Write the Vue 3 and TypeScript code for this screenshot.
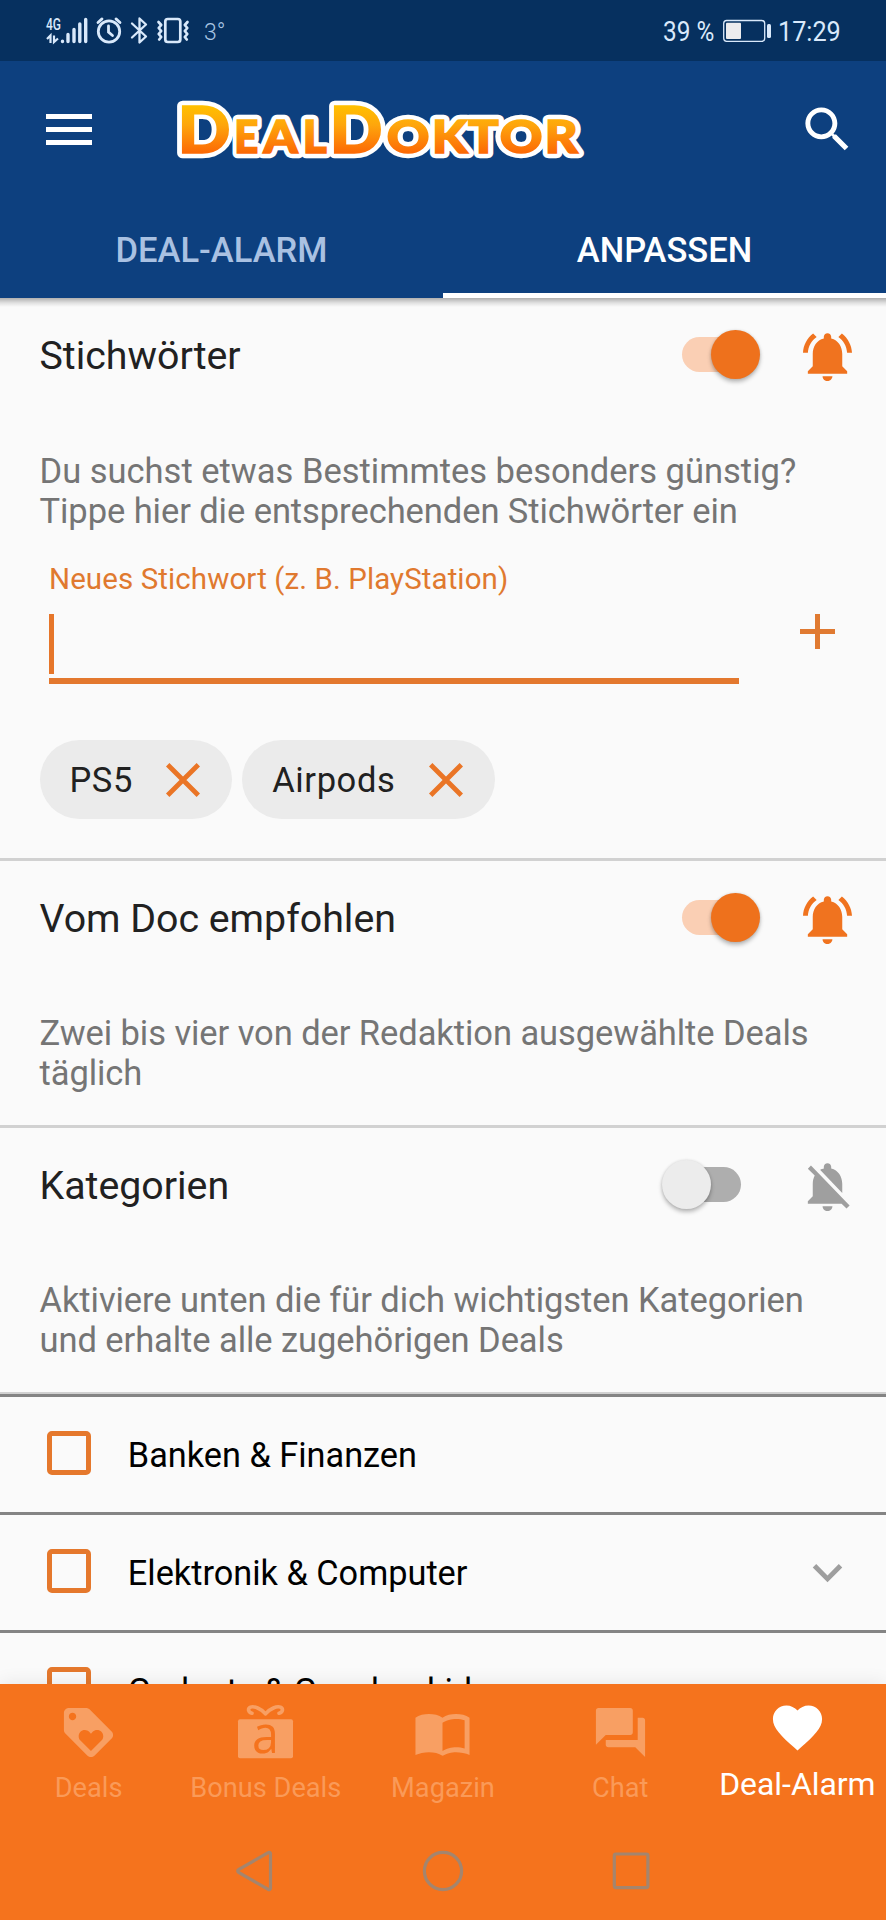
<script setup lang="ts">
import { ref } from 'vue'

interface Glyph { ch: string; x: number; size: number; bearing: number; sx: number }

// Small-caps wordmark: each letter has its own optical width.
const logo: Glyph[] = [
  { ch: 'D', x: 183, size: 64.5, bearing: 5.1, sx: 1.08 },
  { ch: 'E', x: 237.4, size: 45, bearing: 3.5, sx: 0.93 },
  { ch: 'A', x: 263.4, size: 45, bearing: 0, sx: 1.08 },
  { ch: 'L', x: 306.4, size: 45, bearing: 3.5, sx: 1.02 },
  { ch: 'D', x: 334.9, size: 64.5, bearing: 5.1, sx: 1.08 },
  { ch: 'O', x: 388.4, size: 45, bearing: 1.4, sx: 1.17 },
  { ch: 'K', x: 436, size: 45, bearing: 3.5, sx: 1.13 },
  { ch: 'T', x: 468.6, size: 45, bearing: 0.4, sx: 1.12 },
  { ch: 'O', x: 501.4, size: 45, bearing: 1.4, sx: 1.17 },
  { ch: 'R', x: 548.6, size: 45, bearing: 3.5, sx: 1.13 },
]

const tabs = ['DEAL-ALARM', 'ANPASSEN']
const activeTab = ref(1)

const keywords = ref(['PS5', 'Airpods'])
const keywordsOn = ref(true)
const docOn = ref(true)
const categoriesOn = ref(false)

const categories = [
  { name: 'Banken & Finanzen', expandable: false },
  { name: 'Elektronik & Computer', expandable: true },
  { name: 'Gadgets & Geschenkideen', expandable: false },
]

const bellOn = 'M7.58 4.08L6.15 2.65C3.75 4.48 2.17 7.3 2.03 10.5h2c.15-2.65 1.51-4.97 3.55-6.42zm12.39 6.42h2c-.15-3.2-1.73-6.02-4.12-7.85l-1.42 1.43c2.02 1.45 3.39 3.77 3.54 6.42zM18 11c0-3.07-1.64-5.64-4.5-6.32V4c0-.83-.67-1.5-1.5-1.5s-1.5.67-1.5 1.5v.68C7.63 5.36 6 7.92 6 11v5l-2 2v1h16v-1l-2-2v-5zm-6 11c.14 0 .27-.01.4-.04.65-.14 1.18-.58 1.44-1.18.1-.24.15-.5.15-.78h-4c.01 1.1.9 2 2.01 2z'
const bellOff = 'M20 18.69L7.84 6.14 5.27 3.49 4 4.76l2.8 2.8v.01c-.52.99-.8 2.16-.8 3.42v5l-2 2v1h13.73l2 2L21 19.72l-1-1.03zM12 22c1.11 0 2-.89 2-2h-4c0 1.11.89 2 2 2zm6-7.32V11c0-3.08-1.64-5.64-4.5-6.32V4c0-.83-.67-1.5-1.5-1.5s-1.5.67-1.5 1.5v.68c-.15.03-.29.08-.42.12-.1.03-.2.07-.3.11h-.01c-.01 0-.01 0-.02.01-.23.09-.46.2-.68.31 0 0-.01 0-.01.01L18 14.68z'
</script>

<template>
  <div class="screen">
    <div class="status">
      <div class="status-left">
        <svg class="signal" width="43" height="30" viewBox="46 16 43 30">
          <text x="46" y="29.500" class="net" textLength="15" lengthAdjust="spacingAndGlyphs">4G</text>
          <path d="M47 39l3.500-3.500V43M54 35.500V42l4-3.500" fill="none" stroke="currentColor" stroke-width="2.200" />
          <path d="M62.500 41.300v.2M68 34.500v7M74 29.500v12M79.800 24v17.500M85.700 19.500v22" fill="none" stroke="currentColor" stroke-width="3.400" stroke-linecap="round" />
        </svg>
        <svg class="alarm" width="28" height="30" viewBox="95 16 28 30" fill="none" stroke="currentColor" stroke-width="2.800" stroke-linecap="round">
          <circle cx="109" cy="31.500" r="10.700" />
          <path d="M98 22.500l4-3.600M120 22.500l-4-3.600M108.500 26v6l4 3.500" />
        </svg>
        <svg class="bt" width="20" height="30" viewBox="129 16 20 30" fill="none" stroke="currentColor" stroke-width="2.300" stroke-linejoin="round" stroke-linecap="round">
          <path d="M132 23.500l14 13-6.500 6V18.500l6.500 6-14 13" />
        </svg>
        <svg class="vib" width="34" height="30" viewBox="156 16 34 30" fill="none" stroke="currentColor" stroke-width="2.700" stroke-linejoin="round" stroke-linecap="round">
          <rect x="165.300" y="19" width="15" height="23" rx="2.500" />
          <path d="M158.500 22l2.700 3-2.500 3 2.500 3-2.500 3 2.500 3-2 2.500M187.500 22l-2.700 3 2.500 3-2.500 3 2.500 3-2.500 3 2 2.500" />
        </svg>
        <span class="temp">3°</span>
      </div>
      <div class="status-right">
        <span class="pct">39 %</span>
        <svg class="battery" width="50" height="24" viewBox="722 19 50 24">
          <rect x="723.700" y="20.500" width="41" height="20.800" rx="3" fill="none" stroke="currentColor" stroke-width="1.300" />
          <rect x="726" y="22.800" width="15" height="16.300" rx="1" fill="#ececee" />
          <rect x="767" y="24" width="4" height="14" rx="1.500" fill="currentColor" />
        </svg>
        <span class="clock">17:29</span>
      </div>
    </div>

    <header class="header">
      <div class="toolbar">
        <svg class="menu" width="46" height="31" viewBox="0 0 46 31" fill="#fff">
          <rect width="46" height="5" /><rect y="13" width="46" height="5" /><rect y="26" width="46" height="5" />
        </svg>
        <svg class="logo" width="416" height="68" viewBox="172 96 416 68">
          <defs>
            <linearGradient id="gold" gradientUnits="userSpaceOnUse" x1="0" y1="-46" x2="0" y2="0">
              <stop offset="0" stop-color="#ffbf00" />
              <stop offset="0.4" stop-color="#fea60c" />
              <stop offset="1" stop-color="#fc6a05" />
            </linearGradient>
          </defs>
          <g class="outline" aria-hidden="true">
            <g v-for="(g, i) in logo" :key="i" :transform="`translate(${g.x} 152.600) scale(${g.sx} 1)`">
              <text :x="-g.bearing" :font-size="g.size">{{ g.ch }}</text>
            </g>
          </g>
          <g class="face">
            <g v-for="(g, i) in logo" :key="i" :transform="`translate(${g.x} 152.600) scale(${g.sx} 1)`">
              <text :x="-g.bearing" :font-size="g.size">{{ g.ch }}</text>
            </g>
          </g>
        </svg>
        <svg class="search" width="59" height="59" viewBox="0 0 24 24" fill="#fff">
          <path d="M15.500 14h-.79l-.28-.27C15.410 12.590 16 11.110 16 9.500 16 5.910 13.090 3 9.500 3S3 5.910 3 9.500 5.910 16 9.500 16c1.610 0 3.090-.59 4.230-1.570l.27.28v.79l5 4.990L20.490 19l-4.990-5zm-6 0C7.010 14 5 11.990 5 9.500S7.010 5 9.500 5 14 7.010 14 9.500 11.990 14 9.500 14z" />
        </svg>
      </div>
      <nav class="tabs">
        <button v-for="(t, i) in tabs" :key="t" class="tab" :class="{ active: i === activeTab }" @click="activeTab = i">{{ t }}</button>
      </nav>
    </header>

    <main class="content">
      <section class="block first">
        <div class="head">
          <h2>Stichwörter</h2>
          <button class="switch" :class="{ on: keywordsOn }" @click="keywordsOn = !keywordsOn"><i class="track"></i><i class="thumb"></i></button>
          <svg class="bell" :class="{ on: keywordsOn }" viewBox="0 0 24 24"><path :d="keywordsOn ? bellOn : bellOff" /></svg>
        </div>
        <p class="desc">Du suchst etwas Bestimmtes besonders günstig?<br><span class="tight">Tippe hier die entsprechenden Stichwörter ein</span></p>
        <div class="entry">
          <div class="field">
            <label>Neues Stichwort (z. B. PlayStation)</label>
            <div class="input"><span class="caret"></span></div>
          </div>
          <svg class="plus" width="35" height="35" viewBox="0 0 35 35"><path d="M17.500 0v35M0 17.500h35" /></svg>
        </div>
        <div class="chips">
          <span v-for="k in keywords" :key="k" class="chip">
            {{ k }}
            <svg width="34" height="34" viewBox="0 0 34 34"><path d="M1.700 1.700l30.600 30.600M32.300 1.700L1.700 32.300" /></svg>
          </span>
        </div>
      </section>

      <section class="block">
        <div class="head">
          <h2>Vom Doc empfohlen</h2>
          <button class="switch" :class="{ on: docOn }" @click="docOn = !docOn"><i class="track"></i><i class="thumb"></i></button>
          <svg class="bell" :class="{ on: docOn }" viewBox="0 0 24 24"><path :d="docOn ? bellOn : bellOff" /></svg>
        </div>
        <p class="desc tight">Zwei bis vier von der Redaktion ausgewählte Deals<br>täglich</p>
      </section>

      <section class="block last">
        <div class="head">
          <h2>Kategorien</h2>
          <button class="switch" :class="{ on: categoriesOn }" @click="categoriesOn = !categoriesOn"><i class="track"></i><i class="thumb"></i></button>
          <svg class="bell" :class="{ on: categoriesOn }" viewBox="0 0 24 24"><path :d="categoriesOn ? bellOn : bellOff" /></svg>
        </div>
        <p class="desc tight">Aktiviere unten die für dich wichtigsten Kategorien<br>und erhalte alle zugehörigen Deals</p>
      </section>

      <ul class="cats">
        <li v-for="c in categories" :key="c.name">
          <span class="box"></span>
          <span class="name">{{ c.name }}</span>
          <svg v-if="c.expandable" class="chev" width="59" height="59" viewBox="0 0 24 24"><path d="M16.590 8.590L12 13.170 7.410 8.590 6 10l6 6 6-6z" /></svg>
        </li>
      </ul>
    </main>

    <footer class="footer">
      <nav class="bottom">
        <a class="item">
          <svg viewBox="0 0 24 24"><path d="M21.410 11.580l-9-9C12.050 2.220 11.550 2 11 2H4c-1.100 0-2 .9-2 2v7c0 .55.22 1.050.59 1.420l9 9c.36.36.86.58 1.410.58.55 0 1.050-.22 1.410-.59l7-7c.37-.36.59-.86.59-1.410 0-.55-.23-1.060-.59-1.420zM5.500 7C4.670 7 4 6.330 4 5.500S4.670 4 5.500 4 7 4.670 7 5.500 6.330 7 5.500 7zm11.770 8.270L13 19.540l-4.270-4.270C8.280 14.810 8 14.190 8 13.500c0-1.380 1.120-2.500 2.500-2.500.69 0 1.320.28 1.770.74l.73.72.73-.73c.45-.45 1.080-.73 1.770-.73 1.380 0 2.500 1.120 2.500 2.500 0 .69-.28 1.320-.73 1.770z" /></svg>
          <span>Deals</span>
        </a>
        <a class="item">
          <svg viewBox="0 0 59 59">
            <rect x="2" y="16.300" width="55" height="39" rx="2" />
            <path d="M29.500 10.800C25 5.500 18 2.800 14.500 4.200 11.500 5.500 12 9.600 16 10.200M29.500 10.800C34 5.500 41 2.800 44.500 4.200 47.500 5.500 47 9.600 43 10.200" class="bow" />
            <g transform="translate(29.500 50) scale(0.930 1)"><text class="gift-a">a</text></g>
          </svg>
          <span>Bonus Deals</span>
        </a>
        <a class="item">
          <svg viewBox="0 0 24 24"><path fill-rule="evenodd" d="M12 6C10.550 4.900 8.450 4.500 6.500 4.500S2.450 4.900 1 6v15.200C2.450 20.400 4.550 20 6.500 20s4.050.4 5.500 1.500c1.350-.85 3.800-1.500 5.500-1.500 1.650 0 4.050.3 5.500 1.200V6c-1.450-1.100-3.550-1.500-5.500-1.500S13.450 4.900 12 6zm0 2c1.350-.85 3.800-1.500 5.500-1.500 1.200 0 2.400.15 3.500.5v11.500c-1.100-.35-2.300-.5-3.500-.5-1.700 0-4.150.65-5.500 1.500V8z" /></svg>
          <span>Magazin</span>
        </a>
        <a class="item">
          <svg viewBox="0 0 24 24"><path d="M21 6h-2v9H6v2c0 .55.45 1 1 1h11l4 4V7c0-.55-.45-1-1-1zm-4 6V3c0-.55-.45-1-1-1H3c-.55 0-1 .45-1 1v14l4-4h10c.55 0 1-.45 1-1z" /></svg>
          <span>Chat</span>
        </a>
        <a class="item active">
          <svg viewBox="0 0 24 24"><path d="M12 21.350l-1.450-1.320C5.400 15.360 2 12.280 2 8.500 2 5.420 4.420 3 7.500 3c1.740 0 3.410.81 4.500 2.090C13.090 3.810 14.760 3 16.500 3 19.580 3 22 5.420 22 8.500c0 3.780-3.400 6.860-8.550 11.540L12 21.350z" /></svg>
          <span>Deal-Alarm</span>
        </a>
      </nav>
      <div class="sysnav">
        <svg width="42" height="42" viewBox="0 0 42 42"><path d="M36.500 3.800v34.400a1.500 1.500 0 0 1-2.300 1.200L4.500 22.300a1.500 1.500 0 0 1 0-2.600L34.200 2.600a1.500 1.500 0 0 1 2.300 1.200z" /></svg>
        <svg width="42" height="42" viewBox="0 0 42 42"><circle cx="21" cy="21" r="18.600" /></svg>
        <svg width="42" height="42" viewBox="0 0 42 42"><rect x="4.300" y="4" width="33.600" height="33.600" rx="1.500" /></svg>
      </div>
    </footer>
  </div>
</template>

<style>
body { margin: 0; background: #fafafa; }
</style>

<style scoped>
.screen { width: 886px; height: 1920px; display: flex; flex-direction: column; overflow: hidden; background: #fafafa; font-family: Roboto, "Noto Sans", sans-serif; color: #212121; }
.screen svg { display: block; flex: none; overflow: visible; }
button { border: 0; padding: 0; margin: 0; background: none; font: inherit; }

.status { flex: none; height: 61px; background: #06305f; color: #d9e9fb; display: flex; justify-content: space-between; }
.status-left { display: flex; padding: 16px 0 0 46px; height: 30px; }
.net { font: 500 17px Roboto, sans-serif; fill: currentColor; }
.alarm { margin-left: 6px; }
.bt { margin-left: 6px; }
.vib { margin-left: 7px; }
.temp { margin-left: 14px; font-size: 23px; line-height: 30px; font-weight: 300; color: #a9c6e4; padding-top: 1.500px; }
.status-right { display: flex; align-items: flex-start; padding-top: 19px; padding-right: 46px; }
.pct, .clock { font-size: 28px; line-height: 32px; margin-top: -3.500px; transform-origin: 0 50%; white-space: nowrap; }
.pct { width: 59px; transform: scaleX(0.87); }
.battery { margin: 0 6px 0 0; }
.clock { width: 62px; transform: scaleX(0.9); }

.header { flex: none; height: 237px; background: #0d407f; position: relative; z-index: 2; }
.header::after { content: ""; position: absolute; left: 0; right: 0; top: 100%; height: 9px; background: linear-gradient(rgba(0, 0, 0, 0.3), rgba(0, 0, 0, 0.1) 55%, rgba(0, 0, 0, 0)); }
.toolbar { height: 137px; display: flex; align-items: center; padding: 0 29.500px 0 46px; }
.logo { margin-left: 80px; }
.search { margin-left: auto; }
.logo text { font-family: Lato, sans-serif; font-weight: 900; }
.outline { fill: #fff; stroke: #fff; stroke-width: 10.500px; stroke-linejoin: round; }
.face { fill: url(#gold); stroke: url(#gold); stroke-width: 1.600px; }
.tabs { display: flex; height: 100px; }
.tab { flex: 1; box-sizing: border-box; height: 100px; padding-top: 8px; font-size: 34.500px; font-weight: 500; color: #a9c1e2; border-bottom: 5px solid transparent; }
.tab.active { color: #fff; border-bottom-color: #fff; }

.content { flex: 1; min-height: 0; overflow: hidden; }
.block { box-sizing: border-box; height: 267px; border-bottom: 3px solid #d1d1d1; }
.block.first { height: 563px; }
.block.last { height: 266px; border-bottom-width: 2px; }
.head { display: flex; align-items: center; height: 118px; padding: 0 29.500px 0 39.500px; }
h2 { margin: 0; flex: 1; font-size: 39.300px; line-height: 46px; font-weight: 400; padding-bottom: 2px; }
.switch { display: grid; align-items: center; width: 99px; height: 50px; margin: 0 37px 6px 0; }
.track, .thumb { grid-area: 1 / 1; display: block; }
.track { width: 72px; height: 35px; border-radius: 18px; margin-left: 7px; background: #aeaeae; }
.thumb { width: 49px; height: 49px; border-radius: 50%; background: #ececec; box-shadow: 0 3px 4px rgba(0, 0, 0, 0.26), 0 0 3px rgba(0, 0, 0, 0.12); }
.switch.on .track { margin-left: 20px; background: #facfb4; }
.switch.on .thumb { margin-left: 49.500px; background: #ee711c; }
.bell { width: 59px; height: 59px; fill: #9f9f9f; margin-bottom: 1px; }
.bell.on { fill: #f0731f; }
.desc { margin: 34px 0 0 39.500px; font-size: 34.500px; line-height: 40.200px; color: #757575; white-space: nowrap; }
.first .desc { margin-top: 34.500px; }
.tight { letter-spacing: -0.07px; }

.entry { display: flex; margin: 31px 0 0 49px; height: 122.500px; }
.field { width: 690px; }
label { display: block; font-size: 29.500px; line-height: 35px; letter-spacing: 0.09px; color: #e0792f; }
.input { height: 64px; margin-top: 17px; border-bottom: 6px solid #e3782e; }
.caret { display: block; width: 5px; height: 60px; background: #e6762a; }
.plus { margin: 52.200px 0 0 61px; stroke: #e07a31; stroke-width: 5px; }
.chips { display: flex; gap: 10px; margin: 55.600px 0 0 39.500px; }
.chip { display: flex; align-items: center; box-sizing: border-box; height: 79px; border-radius: 40px; background: #ebebeb; padding: 0 32px 0 30px; font-size: 34.500px; letter-spacing: 0.6px; gap: 33.300px; }
.chip svg { stroke: #ea7526; stroke-width: 4.800px; }

.cats { list-style: none; margin: 0; padding: 0; }
.cats li { display: flex; align-items: center; box-sizing: border-box; height: 118px; border-top: 3px solid #848484; padding: 0 29.500px 0 47px; }
.box { box-sizing: border-box; width: 44px; height: 44px; border: 5px solid #e5782c; border-radius: 5px; margin-bottom: 3px; }
.name { flex: 1; margin-left: 36.800px; font-size: 34.300px; line-height: 40px; color: #000; white-space: nowrap; padding-top: 1px; }
.chev { fill: #9e9e9e; margin-bottom: 1px; }

.footer { flex: none; height: 236px; background: #f5731d; position: relative; z-index: 2; box-shadow: 0 0 18px rgba(0, 0, 0, 0.09); }
.bottom { display: flex; height: 137px; }
.item { width: 177.200px; display: flex; flex-direction: column; align-items: center; padding-top: 19px; color: #fa9a58; font-size: 27.200px; }
.item svg { width: 59px; height: 59px; fill: #f89f63; }
.item span { line-height: 32px; margin-top: 9.500px; white-space: nowrap; }
.item.active { color: #fff; font-size: 31.900px; padding-top: 14px; }
.item.active svg { fill: #fff; }
.item.active span { margin-top: 11px; }
.item .bow { fill: none; stroke: #f89f63; stroke-width: 3.600px; stroke-linecap: round; }
.gift-a { font: 400 52px "Open Sans", "Noto Sans", sans-serif; text-anchor: middle; fill: #f5731d; }
.sysnav { display: flex; justify-content: center; gap: 146px; padding-top: 28.500px; }
.sysnav svg { fill: none; stroke: #a4856e; stroke-width: 3.200px; }
</style>
